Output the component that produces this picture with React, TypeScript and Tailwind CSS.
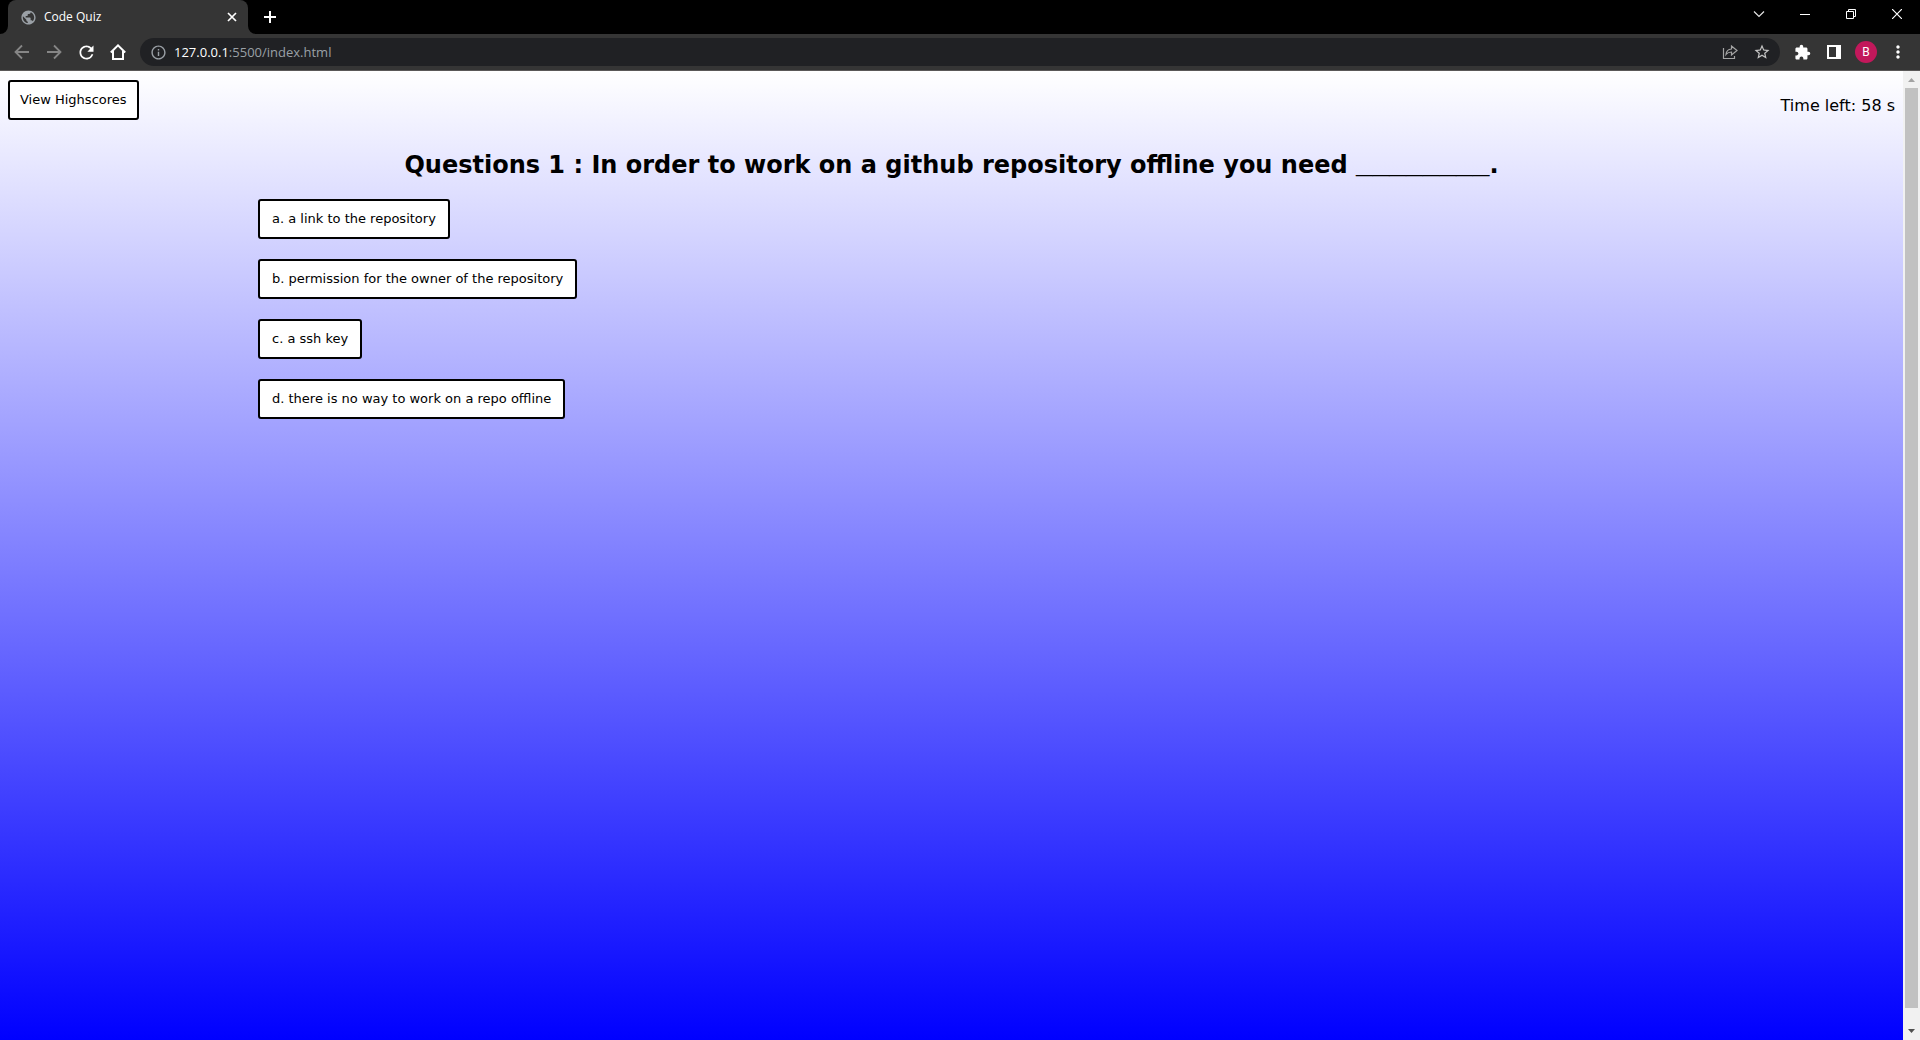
import React from "react";
import { MdExtension, MdMoreVert, MdOutlineInfo, MdPublic, MdRefresh, MdStarBorder } from "react-icons/md";

const answers = [
  "a. a link to the repository",
  "b. permission for the owner of the repository",
  "c. a ssh key",
  "d. there is no way to work on a repo offline",
];

function IconButton({ label, className = "", children }: { label: string; className?: string; children: React.ReactNode }) {
  return (
    <button type="button" aria-label={label} className={`flex h-7 w-8 shrink-0 items-center justify-center ${className}`}>
      {children}
    </button>
  );
}

function WindowButton({ label, children }: { label: string; children: React.ReactNode }) {
  return (
    <button type="button" aria-label={label} className="flex h-7 w-[46px] items-center justify-center text-white">
      {children}
    </button>
  );
}

function TabCurve({ d }: { d: string }) {
  return (
    <svg width="8" height="8" viewBox="0 0 8 8" className="shrink-0 self-end" aria-hidden="true">
      <path d={d} fill="#353535" />
    </svg>
  );
}

function TabStrip() {
  return (
    <header className="flex h-[34px] items-start justify-between bg-black">
      <div className="flex h-full items-center">
        <TabCurve d="M8 0V8H0A8 8 0 0 0 8 0Z" />
        <div className="flex h-full w-60 items-center rounded-t-lg bg-[#353535] pl-3 pr-2">
          <MdPublic size={17} className="text-[#9aa0a6]" />
          <span className="ml-[7px] flex-1 font-['Open_Sans',sans-serif] text-xs leading-4 text-white">Code Quiz</span>
          <button type="button" aria-label="Close tab" className="flex size-4 items-center justify-center text-white">
            <svg width="10" height="10" viewBox="0 0 10 10" fill="none" stroke="currentColor" strokeWidth="1.7">
              <path d="M1 1l8 8M9 1l-8 8" />
            </svg>
          </button>
        </div>
        <TabCurve d="M0 0V8H8A8 8 0 0 1 0 0Z" />
        <button type="button" aria-label="New tab" className="flex size-7 items-center justify-center text-white">
          <svg width="12" height="12" viewBox="0 0 12 12" fill="none" stroke="currentColor" strokeWidth="2">
            <path d="M6 0v12M0 6h12" />
          </svg>
        </button>
      </div>
      <div className="flex">
        <WindowButton label="Search tabs">
          <svg width="12" height="12" viewBox="0 0 12 12" fill="none" stroke="#e4e4e4" strokeWidth="1.2">
            <path d="M1 3.5l5 5 5-5" />
          </svg>
        </WindowButton>
        <WindowButton label="Minimize">
          <svg width="10" height="10" viewBox="0 0 10 10" fill="none" stroke="currentColor">
            <path d="M0 5.5h10" />
          </svg>
        </WindowButton>
        <WindowButton label="Restore">
          <svg width="10" height="10" viewBox="0 0 10 10" fill="none" stroke="currentColor">
            <path d="M.5 2.5h7v7h-7zM2.5 2.5v-2h7v7h-2" />
          </svg>
        </WindowButton>
        <WindowButton label="Close">
          <svg width="10" height="10" viewBox="0 0 10 10" fill="none" stroke="currentColor" strokeWidth="1.2">
            <path d="M0 0l10 10M10 0L0 10" />
          </svg>
        </WindowButton>
      </div>
    </header>
  );
}

function Toolbar() {
  return (
    <nav aria-label="Browser toolbar" className="flex h-[37px] items-center border-b border-[#5a5858] bg-[#353535] px-1.5 text-white">
      <IconButton label="Back" className="text-[#868686]">
        <svg width="16" height="16" viewBox="0 0 16 16" fill="none" stroke="currentColor" strokeWidth="1.8">
          <path d="M15 8H2M8 1.5L1.5 8 8 14.5" />
        </svg>
      </IconButton>
      <IconButton label="Forward" className="text-[#868686]">
        <svg width="16" height="16" viewBox="0 0 16 16" fill="none" stroke="currentColor" strokeWidth="1.8">
          <path d="M1 8h13M8 1.5L14.5 8 8 14.5" />
        </svg>
      </IconButton>
      <IconButton label="Reload">
        <MdRefresh size={21} />
      </IconButton>
      <IconButton label="Home">
        <svg width="16" height="16" viewBox="0 0 16 16" fill="none" stroke="currentColor" strokeWidth="2">
          <path d="M.8 8.5L8 1.4l7.2 7.1M3 7v8h10V7" />
        </svg>
      </IconButton>
      <div className="mx-1.5 flex h-7 flex-1 items-center rounded-full bg-[#202124] px-0.5">
        <IconButton label="Site information" className="text-[#9aa0a6]">
          <MdOutlineInfo size={17} />
        </IconButton>
        <a href="#address" className="flex-1 font-['Open_Sans',sans-serif] text-[13px] leading-5 text-[#9aa0a6]">
          <span className="text-white">127.0.0.1</span>:5500/index.html
        </a>
        <IconButton label="Share" className="text-[#a4a4a4]">
          <svg width="16" height="16" viewBox="0 0 16 16" fill="none" stroke="currentColor" strokeWidth="1.2">
            <path d="M1.5 4v10.500h11V12M4 10.500c.3-3.600 2.200-5.300 5.500-5.500V2l5.500 4.500-5.500 4.500V8c-2.500 0-4.200.8-5.500 2.500z" />
          </svg>
        </IconButton>
        <IconButton label="Bookmark" className="text-[#c4c4c4]">
          <MdStarBorder size={18} />
        </IconButton>
      </div>
      <IconButton label="Extensions">
        <MdExtension size={17} />
      </IconButton>
      <IconButton label="Side panel">
        <svg width="14" height="14" viewBox="0 0 14 14" fill="currentColor" fillRule="evenodd">
          <path d="M0 0h14v14H0zM2 2v10h7V2z" />
        </svg>
      </IconButton>
      <IconButton label="Profile">
        <span className="flex size-[22px] items-center justify-center rounded-full bg-[#c2185b] font-[Roboto,sans-serif] text-xs leading-none">B</span>
      </IconButton>
      <IconButton label="Menu">
        <MdMoreVert size={20} />
      </IconButton>
    </nav>
  );
}

function QuizButton({ className, children }: { className: string; children: React.ReactNode }) {
  return (
    <button type="button" className={`h-10 rounded-[3px] border-2 border-black bg-white text-[13px] leading-4 text-black ${className}`}>
      {children}
    </button>
  );
}

function Quiz() {
  return (
    <main className="flex-1 bg-linear-to-b/srgb from-white to-[#0000ff] font-[Verdana,'DejaVu_Sans',sans-serif] text-black">
      <div className="flex items-start justify-between px-2 pt-[9px]">
        <QuizButton className="px-2.5">View Highscores</QuizButton>
        <p className="mt-4 text-base leading-5">Time left: 58 s</p>
      </div>
      <section className="mx-[258px] mt-7">
        <h1 className="whitespace-nowrap text-center text-2xl leading-8 font-bold">
          Questions 1 : In order to work on a github repository offline you need{" "}
          <span className="font-['Liberation_Sans',sans-serif] text-3xl leading-none">________</span>.
        </h1>
        <ul className="mt-[18px] flex flex-col items-start gap-5">
          {answers.map((answer) => (
            <li key={answer} className="flex">
              <QuizButton className="px-3">{answer}</QuizButton>
            </li>
          ))}
        </ul>
      </section>
    </main>
  );
}

function Scrollbar() {
  return (
    <div aria-hidden="true" className="flex w-[17px] shrink-0 flex-col items-center bg-[#f1f1f1]">
      <span className="flex h-[17px] items-center justify-center">
        <svg width="7" height="4" viewBox="0 0 7 4"><path d="M0 4L3.5 0 7 4z" fill="#a3a3a3" /></svg>
      </span>
      <span className="w-[13px] flex-1 bg-[#c1c1c1]" />
      <span className="flex h-8 items-end justify-center pb-[7px]">
        <svg width="7" height="4" viewBox="0 0 7 4"><path d="M0 0L3.5 4 7 0z" fill="#505050" /></svg>
      </span>
    </div>
  );
}

export default function App() {
  return (
    <div className="flex min-h-screen flex-col">
      <TabStrip />
      <Toolbar />
      <div className="flex flex-1">
        <Quiz />
        <Scrollbar />
      </div>
    </div>
  );
}
